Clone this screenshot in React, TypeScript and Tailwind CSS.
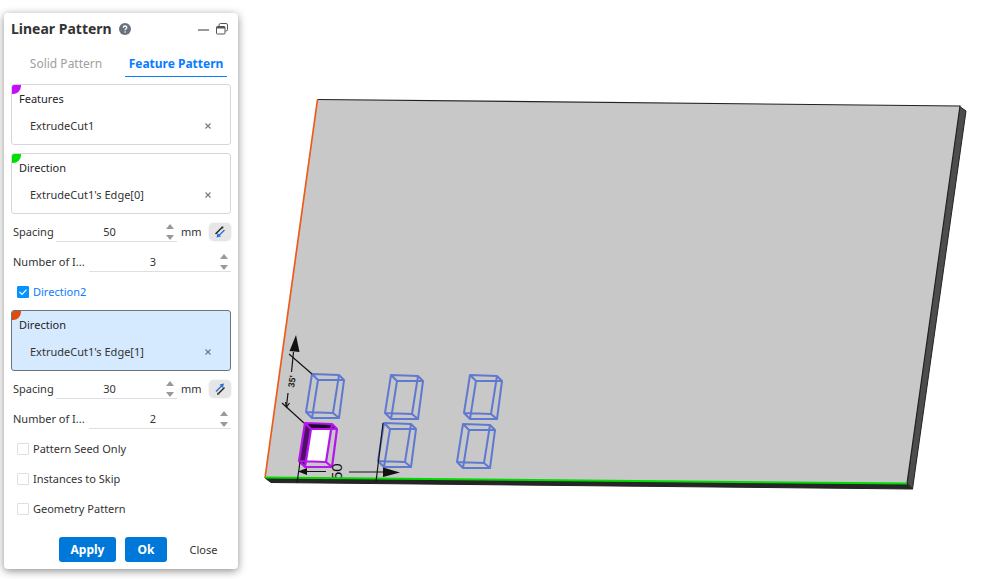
import { useState } from 'react'
import clsx from 'clsx'

interface SelectionBoxProps {
    label: string
    item: string
    cornerClass: string
    active?: boolean
}

const SelectionBox = ({ label, item, cornerClass, active }: SelectionBoxProps) => {
    const [value, setValue] = useState(item)

    return (
        <section
            aria-label={label}
            className={clsx(
                'relative h-[61px] overflow-hidden rounded-[3px] border px-[7px] pt-1',
                active ? 'border-[#6b7280] bg-[#d5e9ff]' : 'border-[#d9d5da] bg-white'
            )}
        >
            <span className={clsx('absolute left-0 top-0 h-[9px] w-[9px] rounded-br-[8px]', cornerClass)} />
            <h2 className="relative leading-5 text-[#1f2328]">{label}</h2>
            {value && (
                <div className="mt-[7px] flex items-center justify-between pl-[11px] pr-[5px] leading-5">
                    <span>{value}</span>
                    <button
                        type="button"
                        aria-label={`Remove ${value}`}
                        onClick={() => setValue('')}
                        className="flex h-5 w-5 items-center justify-center"
                    >
                        <svg viewBox="0 0 6 6" className="h-1.5 w-1.5" stroke="#777" strokeWidth="1.1">
                            <path d="M.5.5l5 5M5.5.5l-5 5" />
                        </svg>
                    </button>
                </div>
            )}
        </section>
    )
}

interface NumberRowProps {
    id: string
    label: string
    initial: number
    unit?: string
    reversed?: boolean
}

const NumberRow = ({ id, label, initial, unit, reversed }: NumberRowProps) => {
    const [value, setValue] = useState(initial)
    const [flipped, setFlipped] = useState(!!reversed)

    return (
        <div className="flex h-[30px] items-center pl-0.5">
            <label htmlFor={id} className={clsx('shrink-0 whitespace-nowrap', unit ? 'w-[43px]' : 'w-[76px]')}>
                {label}
            </label>
            <div className="flex h-5 min-w-0 flex-1 items-center border-b border-[#dcdfe6]">
                <input
                    id={id}
                    inputMode="numeric"
                    value={value}
                    onChange={(e) => setValue(Number(e.target.value) || 0)}
                    className="h-5 w-full min-w-0 bg-transparent text-center outline-none"
                />
                <div className="flex w-3.5 shrink-0 flex-col items-center gap-1.5">
                    <button type="button" aria-label={`Increase ${label}`} onClick={() => setValue(value + 1)}>
                        <svg viewBox="0 0 8 5" className="h-[5px] w-2" fill="#999">
                            <path d="M4 0l4 5H0z" />
                        </svg>
                    </button>
                    <button type="button" aria-label={`Decrease ${label}`} onClick={() => setValue(value - 1)}>
                        <svg viewBox="0 0 8 5" className="h-[5px] w-2" fill="#999">
                            <path d="M0 0h8L4 5z" />
                        </svg>
                    </button>
                </div>
            </div>
            {unit && (
                <>
                    <span className="w-8 pl-1">{unit}</span>
                    <button
                        type="button"
                        aria-label="Reverse direction"
                        onClick={() => setFlipped(!flipped)}
                        className="flex h-[18px] w-[22px] items-center justify-center rounded-[5px] bg-[#e6e6e6] shadow-[0_0_2px_#ddd]"
                    >
                        <svg viewBox="0 0 12 12" className="h-3 w-3" fill="none" strokeWidth="1.4">
                            {flipped ? (
                                <>
                                    <path d="M2 8.5L8 2.500" stroke="#2a72d4" />
                                    <path d="M5.500 1.500L10 .5 8.800 5z" fill="#2a72d4" />
                                    <path d="M4.500 10.500L10.500 4.500" stroke="#222" />
                                    <path d="M3.500 9.500l2 2-2.500.2z" fill="#222" />
                                </>
                            ) : (
                                <>
                                    <path d="M1.500 8L8 1.500" stroke="#222" />
                                    <path d="M7 .8l2.500-.3-.5 2.500z" fill="#222" />
                                    <path d="M10.500 4L5 9.500" stroke="#2a72d4" />
                                    <path d="M3.500 7L2.500 11.500 7 10.500z" fill="#2a72d4" />
                                </>
                            )}
                        </svg>
                    </button>
                </>
            )}
        </div>
    )
}

interface CheckRowProps {
    label: string
    defaultChecked?: boolean
}

const CheckRow = ({ label, defaultChecked }: CheckRowProps) => (
    <label className={clsx('flex h-[30px] items-center gap-1 pl-1.5', defaultChecked && 'text-[#0a7cff]')}>
        <span className="relative flex h-3 w-3">
            <input
                type="checkbox"
                defaultChecked={defaultChecked}
                className="peer h-3 w-3 appearance-none rounded-[1px] border border-[#dcdfe6] bg-white checked:border-[#0593ff] checked:bg-[#0593ff]"
            />
            <svg
                viewBox="0 0 12 12"
                className="pointer-events-none absolute inset-0 hidden h-3 w-3 peer-checked:block"
                fill="none"
                stroke="#fff"
                strokeWidth="1.2"
            >
                <path d="M2.500 5.800l2.500 2.500 4.500-4.600" />
            </svg>
        </span>
        {label}
    </label>
)

const PatternPanel = () => {
    const [tab, setTab] = useState('Feature Pattern')

    return (
        <aside className="ml-1 mt-[13px] w-[234px] shrink-0 self-start rounded-[4px] bg-white px-[7px] pb-[7px] shadow-[0_2px_8px_rgba(0,0,0,0.45)]">
            <header className="flex h-8 items-center">
                <h1 className="text-[14px] font-bold leading-5 text-[#333]">Linear Pattern</h1>
                <button type="button" aria-label="Help" className="ml-[7px]">
                    <svg viewBox="0 0 12 12" className="h-3 w-3">
                        <circle cx="6" cy="6" r="6" fill="#68727c" />
                        <path d="M4.300 4.700c0-2.300 3.500-2.200 3.500-.2C7.800 5.800 6.100 5.800 6.100 7.200" fill="none" stroke="#fff" strokeWidth="1.300" />
                        <circle cx="6.100" cy="9" r=".8" fill="#fff" />
                    </svg>
                </button>
                <button type="button" aria-label="Minimize" className="ml-auto">
                    <svg viewBox="0 0 11 12" className="h-3 w-[11px]" stroke="#777" strokeWidth="1.500">
                        <path d="M0 7h11" />
                    </svg>
                </button>
                <button type="button" aria-label="Restore" className="ml-[7px] mr-[3px]">
                    <svg viewBox="0 0 12 12" className="h-3 w-3" fill="none" stroke="#555">
                        <path d="M3 3V2q0-1.500 1.500-1.500h5.500q1.500 0 1.500 1.500v4.500q0 1.500-1.500 1.500H9.500" />
                        <rect x=".5" y="3.500" width="8.500" height="7.500" rx="1" />
                        <path d="M.5 4.500h8.500" strokeWidth="2" />
                    </svg>
                </button>
            </header>

            <div role="tablist" className="mb-[7px] flex h-8 gap-3 text-[12px]">
                {['Solid Pattern', 'Feature Pattern'].map((name) => (
                    <button
                        key={name}
                        type="button"
                        role="tab"
                        aria-selected={tab === name}
                        onClick={() => setTab(name)}
                        className={clsx(
                            'w-[102px] border-b pt-1.5 text-center',
                            tab === name ? 'border-[#0a7cff] font-bold text-[#0a7cff]' : 'border-transparent pl-2 text-[#a0a0a0]'
                        )}
                    >
                        {name}
                    </button>
                ))}
            </div>

            <div className="flex flex-col gap-2">
                <SelectionBox label="Features" item="ExtrudeCut1" cornerClass="bg-[#c40dff]" />
                <SelectionBox label="Direction" item="ExtrudeCut1's Edge[0]" cornerClass="bg-[#00e000]" />
            </div>
            <div className="py-[3px]">
                <NumberRow id="spacing1" label="Spacing" initial={50} unit="mm" />
                <NumberRow id="count1" label="Number of I..." initial={3} />
                <CheckRow label="Direction2" defaultChecked />
            </div>
            <SelectionBox label="Direction" item="ExtrudeCut1's Edge[1]" cornerClass="bg-[#e04a0c]" active />
            <div className="pt-[3px]">
                <NumberRow id="spacing2" label="Spacing" initial={30} unit="mm" reversed />
                <NumberRow id="count2" label="Number of I..." initial={2} />
                <CheckRow label="Pattern Seed Only" />
                <CheckRow label="Instances to Skip" />
                <CheckRow label="Geometry Pattern" />
            </div>

            <footer className="mt-[13px] flex h-[25px] justify-end gap-[9px]">
                <button type="button" className="w-[57px] rounded-[3px] bg-[#0078d9] text-[12px] font-bold text-white">
                    Apply
                </button>
                <button type="button" className="w-[42px] rounded-[3px] bg-[#0078d9] text-[12px] font-bold text-white">
                    Ok
                </button>
                <button type="button" className="w-[55px]">
                    Close
                </button>
            </footer>
        </aside>
    )
}

// offsets of the pattern instances from the first one in the top row
const instances = [
    { x: 0, y: 0 },
    { x: 79, y: 1 },
    { x: 158, y: 1 },
    { x: 72, y: 49 },
    { x: 151, y: 50 },
]

const cutEdges =
    'M312 374L339 375 333 413 306 412ZM318 380L344 380 339 418 312 418ZM312 374L318 380M339 375L344 380M333 413L339 418M306 412L312 418'

const Viewport = () => (
    <svg viewBox="238 0 744 579" className="h-screen min-w-0 flex-1" role="img" aria-label="Plate model">
        <path d="M959 106L966 111 912.500 489 907 483Z" fill="#4d4d4d" stroke="#222" />
        <path d="M317.500 99.500L960 106 907 483.500 265 478Z" fill="#c8c8c8" />
        <path d="M317.500 99.500L960 106 907 483.500" fill="none" stroke="#222" strokeWidth="1.200" />
        <path d="M317.500 99.500L265 478" stroke="#ee5a1c" strokeWidth="1.700" />

        <g fill="none" stroke="#6079d0" strokeWidth="2" strokeLinejoin="round">
            {instances.map(({ x, y }) => (
                <path key={`${x}-${y}`} d={cutEdges} transform={`translate(${x} ${y})`} />
            ))}
        </g>

        <g transform="translate(-7 49)">
            <path d="M312 374L339 375 344 380 318 380 312 418 306 412Z" fill="#501064" />
            <path d="M313 374L338 375 341 379 318 380Z" fill="#240030" />
            <path d="M338 380L344 380 339 418 333 413Z" fill="#c8c8c8" />
            <path d="M318 380L337 380 333 413 312 413Z" fill="#fff" />
            <path d={cutEdges} fill="none" stroke="#b516ee" strokeWidth="2.200" strokeLinejoin="round" />
        </g>

        <text
            transform="translate(342 480) rotate(-90)"
            fontSize="15"
            className="font-['Liberation_Sans',sans-serif]"
            fill="#111"
        >
            50
        </text>
        <text
            transform="translate(294 388) rotate(-80)"
            fontSize="9"
            fontWeight="bold"
            className="font-['Liberation_Sans',sans-serif]"
            fill="#222"
        >
            35'
        </text>

        <path d="M265 478L907 484 912.500 489 271 482.500Z" fill="#262626" stroke="#222" />
        <path d="M265 477.500L907 483.500" stroke="#00dc00" strokeWidth="2" />

        <g fill="none" stroke="#151515" strokeWidth="1.200">
            <path d="M289 354L312 374M282 403L304 423" />
            <path d="M293.500 352L291.500 372M288 393L286.500 406" />
            <path d="M300 462L297 483M383 423L376 482" />
            <path d="M301 471.500H326M349 472H386" />
            <path d="M285.500 402L286.500 407 289.500 403" />
        </g>
        <path d="M296 335L299.500 352 289.500 351Z" fill="#111" />
        <path d="M298 471.500L307 468V475Z" fill="#111" />
        <path d="M400 472.500L383 467.500V477Z" fill="#111" />
    </svg>
)

const App = () => {
    return (
        <main className="flex min-h-screen bg-white font-['Noto_Sans','Open_Sans',sans-serif] text-[11px] leading-4 text-[#333]">
            <PatternPanel />
            <Viewport />
        </main>
    )
}

export default App
